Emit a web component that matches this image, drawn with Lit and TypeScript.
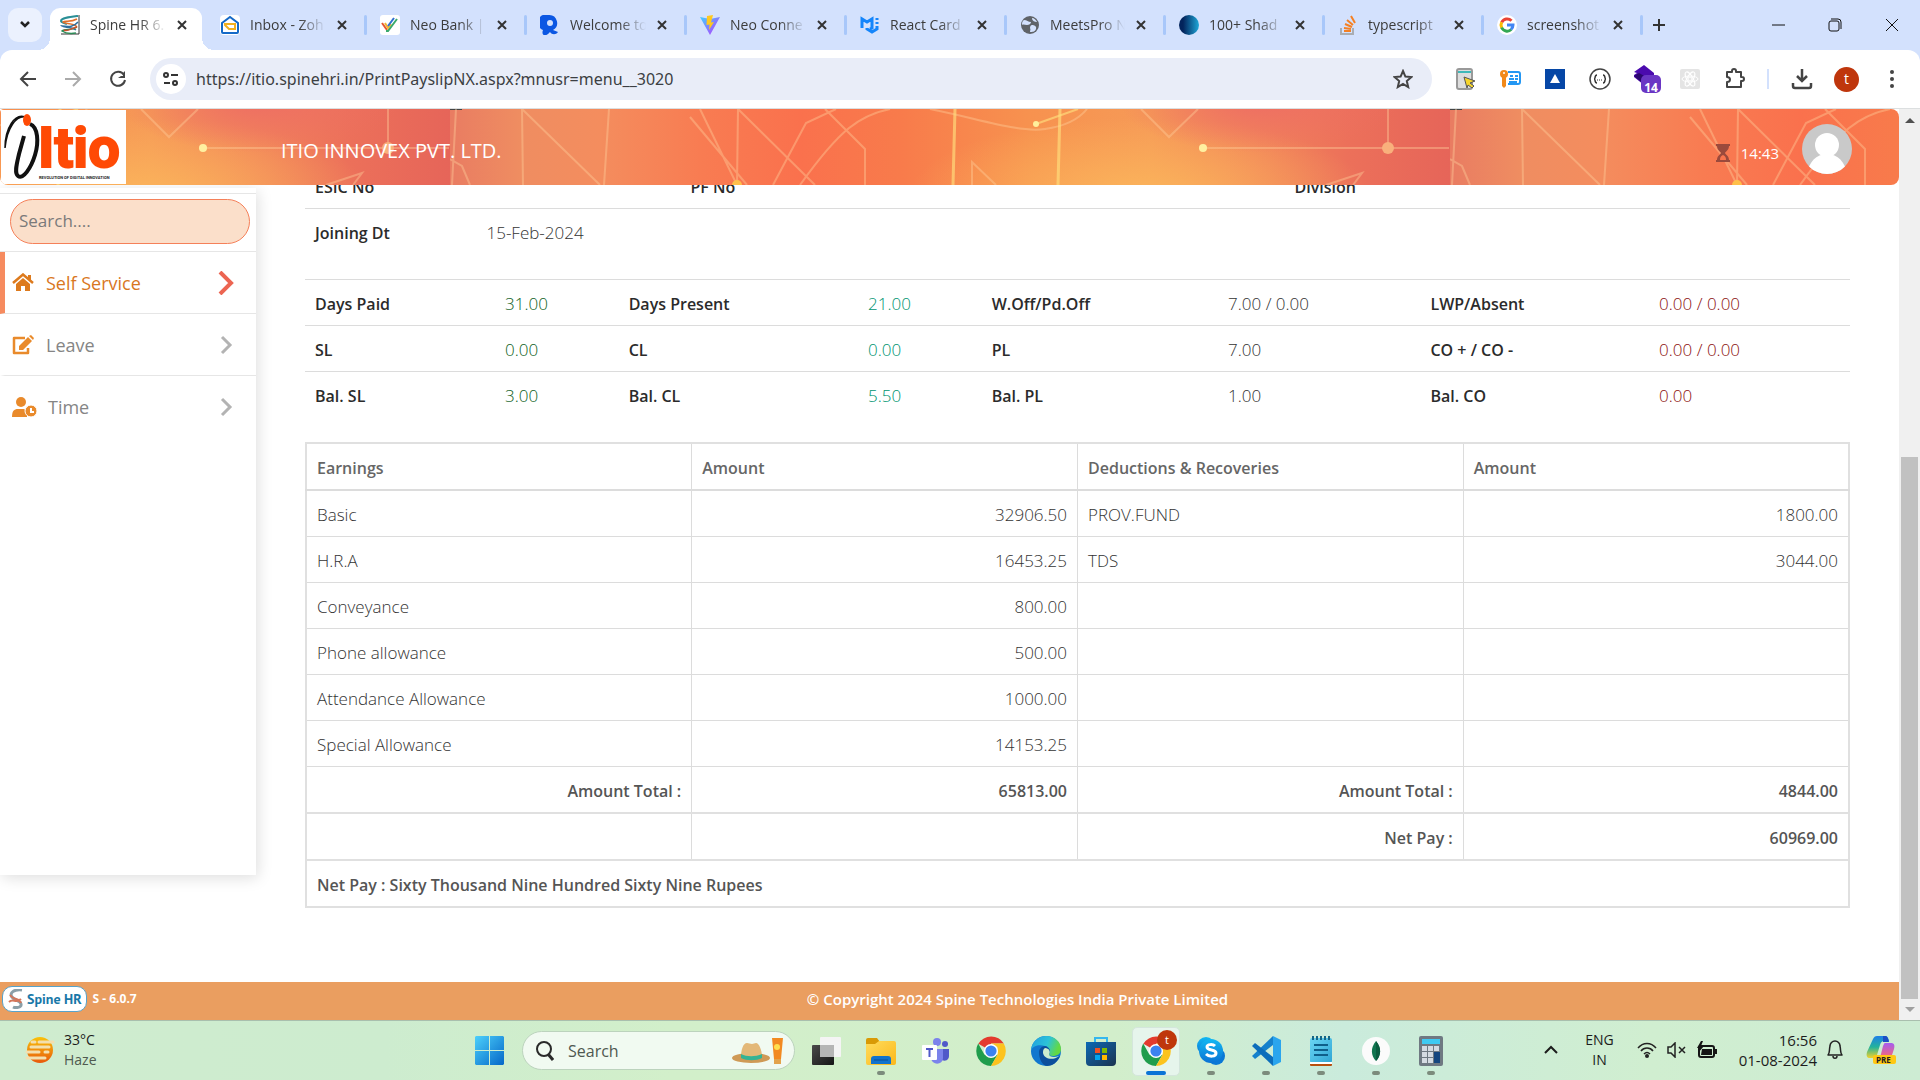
import { LitElement, html, svg, css, nothing, TemplateResult } from "lit";
import { customElement } from "lit/decorators.js";

const icon = (w: number, h: number, body: unknown) =>
  html`<svg width=${w} height=${h} viewBox="0 0 ${w} ${h}" fill="none" aria-hidden="true">${body}</svg>`;

const chromeMark = svg`
  <path d="M15 15 2.4 7.8A15 15 0 0 1 27.9 7.5H15Z" fill="#e33b2e"/>
  <path d="M2.2 7.6A15 15 0 0 0 15 30l6.5-11.3L15 15 8.5 18.7Z" fill="#1f9d4c"/>
  <path d="M27.8 7.5A15 15 0 0 1 15 30l6.5-11.2L21.4 11 15 7.5Z" fill="#fcc31e"/>
  <circle cx="15" cy="15" r="7" fill="#fff"/><circle cx="15" cy="15" r="5.6" fill="#3b82f0"/>`;

const favicons: Record<string, TemplateResult> = {
  spine: icon(20, 20, svg`
    <path d="M19 0v19H1" stroke="#333" stroke-width="1"/>
    <path d="M18 1C10 2 1 3 1 6c0 2 4 2 6 3" stroke="#2a8f96" stroke-width="2"/>
    <path d="M17 4C10 8 5 5 3 7c0 2 12 1 14 5" stroke="#e2702a" stroke-width="1.500"/>
    <path d="M18 7c-4 5-9 5-16 4 2 2 9 0 14 4" stroke="#2d6f9e" stroke-width="1.500"/>
    <path d="M17 12c-5 4-12 1-15 4 3 2 8 3 14 2" stroke="#2e8b57" stroke-width="1.500"/>
    <path d="M4 15c4 2 7-2 13-3" stroke="#c8502d" stroke-width="1.500"/>`),
  inbox: icon(20, 20, svg`
    <rect width="20" height="20" rx="4" fill="#fff"/>
    <path d="M2 8 10 2l8 6v9a1 1 0 0 1-1 1H3a1 1 0 0 1-1-1Z" stroke="#1469c7" stroke-width="2"/>
    <path d="M5 9h10v5H9l-4-4Z" fill="#fff" stroke="#f2b01e" stroke-width="2"/>`),
  neobank: icon(20, 20, svg`
    <rect width="20" height="20" rx="3" fill="#fff"/>
    <path d="m2 8 5 7" stroke="#e4572e" stroke-width="2"/>
    <path d="m5 8 3 5 3-4" stroke="#f2b632" stroke-width="2"/>
    <path d="m6 16 2 0 9-12" stroke="#39a96b" stroke-width="2"/>
    <path d="m8 11 6-8" stroke="#2f6fd0" stroke-width="2"/>`),
  welcome: icon(20, 20, svg`
    <path d="M9 0a8 8 0 0 1 4 15l5 2c-2 3-6 3-8 0-5 6-9 3-7-2A8 8 0 0 1 9 0Z" fill="#0b57e3"/>
    <circle cx="10" cy="8" r="3" fill="#d3e1fd"/>`),
  vite: icon(20, 20, svg`
    <defs><linearGradient id="vg" x1="0" y1="0" x2="1" y2="1"><stop stop-color="#41d1ff"/><stop offset="1" stop-color="#bd34fe"/></linearGradient></defs>
    <path d="m0 2 10 18L20 2l-10 2Z" fill="url(#vg)"/>
    <path d="m13 0-6 1-.5 9 3-.6L9 15l5-8-3 .5Z" fill="#ffc820"/>`),
  mui: icon(20, 20, svg`
    <path d="M2 13V4l5 3 5-3v4M7 13v1l5 3 5-3v-3M12 8v5l-2 1M17 9V7M17 5V3" stroke="#1485fb" stroke-width="3"/>`),
  meets: icon(20, 20, svg`
    <circle cx="10" cy="10" r="9" fill="#5f6368"/>
    <path d="M4 5c3 0 4 2 7 2 0 2-2 3-4 3s-4-1-5 0c0-2 0-4 2-5ZM12 10c2 0 5 1 4 4s-4 3-6 3c0-2 1-2 0-4 0-2 1-3 2-3ZM12 3c2 0 4 2 5 4-2 0-5-1-5-4Z" fill="#d3e1fd"/>`),
  shades: icon(20, 20, svg`
    <defs><linearGradient id="sg"><stop offset=".2" stop-color="#03245c"/><stop offset="1" stop-color="#1fa7d8"/></linearGradient></defs>
    <circle cx="10" cy="10" r="10" fill="url(#sg)"/>`),
  stack: icon(20, 20, svg`
    <path d="M3 13v6h12v-6" stroke="#a9adb3" stroke-width="2"/>
    <path d="M6 16h7M6 13l7 1M7 9l7 3M9 5l6 5M13 1l4 7" stroke="#f48024" stroke-width="2"/>`),
  google: icon(20, 20, svg`
    <circle cx="10" cy="10" r="10" fill="#fff"/>
    <path d="M14.5 5.8A6 6 0 0 0 4.700 7.400" stroke="#ea4335" stroke-width="3"/>
    <path d="M4.700 7.200a6 6 0 0 0 0 5.600" stroke="#fbbc05" stroke-width="3"/>
    <path d="M4.600 12.500a6 6 0 0 0 9.600 2" stroke="#34a853" stroke-width="3"/>
    <path d="M10 10h6a6 6 0 0 1-2 4.500" stroke="#4285f4" stroke-width="3"/>`),
};

const TABS = [
  ["spine", "Spine HR 6."],
  ["inbox", "Inbox - Zoh"],
  ["neobank", "Neo Bank |"],
  ["welcome", "Welcome to"],
  ["vite", "Neo Conne"],
  ["mui", "React Card"],
  ["meets", "MeetsPro N"],
  ["shades", "100+ Shad"],
  ["stack", "typescript"],
  ["google", "screenshot"],
];

const closeX = icon(12, 12, svg`<path d="m2 2 8 8M10 2 2 10" stroke="#333" stroke-width="2"/>`);

const tool = {
  back: icon(18, 18, svg`<path d="M17 9H3M9 2 2 9l7 7" stroke="#444" stroke-width="2"/>`),
  forward: icon(18, 18, svg`<path d="M1 9h14M9 2l7 7-7 7" stroke="#aaa" stroke-width="2"/>`),
  reload: icon(18, 18, svg`<path d="M15 5a7 7 0 1 0 1 5" stroke="#444" stroke-width="2"/><path d="M16 1v7H9l3-2h2V3Z" fill="#444"/>`),
  site: icon(18, 16, svg`<circle cx="4" cy="4" r="2" stroke="#333" stroke-width="2"/><path d="M9 4h7M2 12h6" stroke="#333" stroke-width="2"/><circle cx="13" cy="12" r="2" stroke="#333" stroke-width="2"/>`),
  star: icon(20, 20, svg`<path d="m10 2 2.400 5.600 6 .5-4.600 4 1.400 6L10 15l-5.200 3.100 1.400-6-4.600-4 6-.5Z" stroke="#444" stroke-width="2"/>`),
};

const extensions = [
  ["Page picker", icon(22, 22, svg`<rect x="3" y="1" width="15" height="20" rx="2" fill="#ddd" stroke="#999" stroke-width="2"/><path d="M4 4h13" stroke="#3fb8b8" stroke-width="2"/><path d="m10 9 11 4-5 2 4 3-2 2-4-3-1 3Z" fill="#f7d52a" stroke="#555" stroke-width="1"/>`)],
  ["Password manager", icon(22, 22, svg`<circle cx="5" cy="6" r="4" fill="#f28a1a"/><path d="M3 8h4v10l-2 2-2-2Z" fill="#f28a1a"/><circle cx="5" cy="5" r="1" fill="#fff"/><path d="M9 4h10a2 2 0 0 1 2 2v8a2 2 0 0 1-2 2H9" stroke="#2497f3" stroke-width="2"/><path d="M11 8h3m2 0h3M10 11h5m1 0h3M10 14h8" stroke="#2497f3" stroke-width="2"/>`)],
  ["Triangle", icon(20, 20, svg`<rect width="20" height="20" fill="#0647a6"/><path d="m10 5 5 9H5Z" fill="#fff"/>`)],
  ["JSON viewer", icon(22, 22, svg`<circle cx="11" cy="11" r="10" stroke="#444" stroke-width="1.500"/><path d="M8 7c-3 0-1 4-3 4 2 0 0 4 3 4M14 7c3 0 1 4 3 4-2 0 0 4-3 4" stroke="#333" stroke-width="1.500"/><path d="M8 12h1m1 0h1m1 0h1" stroke="#333"/>`)],
  ["Layers", icon(32, 32, svg`<path d="m15 2 10 8v4l-10 8-10-8v-2l3-2-3-1Z" fill="#4b0aae"/><path d="m5 13 5-3 7 4v9Z" fill="#2b066e"/><rect x="12" y="12" width="20" height="18" rx="5" fill="#6a36c4"/>`)],
  ["React tools", icon(20, 20, svg`<rect width="20" height="20" rx="2" fill="#e4e4e4"/><g stroke="#fff" stroke-width="1"><ellipse cx="10" cy="10" rx="8" ry="3"/><ellipse cx="10" cy="10" rx="8" ry="3" transform="rotate(60 10 10)"/><ellipse cx="10" cy="10" rx="8" ry="3" transform="rotate(120 10 10)"/><circle cx="10" cy="10" r="2"/></g>`)],
  ["Extensions", icon(22, 22, svg`<path d="M3 4h5V3a2 2 0 0 1 4 0v1h5v5h1a2 2 0 0 1 0 4h-1v6H3v-5c4 0 4-5 0-5Z" stroke="#444" stroke-width="2" stroke-linejoin="round"/>`)],
] as const;

const downloadIcon = icon(22, 22, svg`<path d="M11 1v11M6 8l5 5 5-5M2 15v3a2 2 0 0 0 2 2h14a2 2 0 0 0 2-2v-3" stroke="#444" stroke-width="2.500"/>`);
const dotsIcon = icon(4, 20, svg`<g fill="#444"><circle cx="2" cy="3" r="2"/><circle cx="2" cy="10" r="2"/><circle cx="2" cy="17" r="2"/></g>`);

const bannerArt = svg`
  <defs>
    <linearGradient id="base" gradientUnits="userSpaceOnUse" x1="0" y1="0" x2="1000" y2="0">
      <stop offset="0" stop-color="#e97c62"/><stop offset=".07" stop-color="#ef8d61"/>
      <stop offset=".15" stop-color="#f48d5e"/><stop offset=".25" stop-color="#f87c52"/>
      <stop offset=".35" stop-color="#fa714d"/><stop offset=".45" stop-color="#f87b4b"/>
      <stop offset=".58" stop-color="#f7924f"/><stop offset=".7" stop-color="#f69a57"/>
      <stop offset=".8" stop-color="#f2865a"/><stop offset=".9" stop-color="#ec705a"/>
      <stop offset="1" stop-color="#e66559"/>
    </linearGradient>
    <radialGradient id="warm" gradientUnits="userSpaceOnUse" cx="0" cy="0" r="1" gradientTransform="translate(690 86) scale(230 78)">
      <stop stop-color="#fbb45b"/><stop offset="1" stop-color="#fbb45b" stop-opacity="0"/>
    </radialGradient>
    <radialGradient id="rose" gradientUnits="userSpaceOnUse" cx="0" cy="0" r="1" gradientTransform="translate(810 -6) scale(140 50)">
      <stop stop-color="#ee6f63"/><stop offset="1" stop-color="#ee6f63" stop-opacity="0"/>
    </radialGradient>
    <pattern id="circuit" patternUnits="userSpaceOnUse" x="450" y="0" width="1000" height="76">
      <rect width="1000" height="76" fill="url(#base)"/>
      <rect width="1000" height="76" fill="url(#warm)"/>
      <rect width="1000" height="76" fill="url(#rose)"/>
      <rect x="0" width="12" height="1" fill="#444"/>
      <g fill="none" stroke="#ffd09a" stroke-opacity=".4" stroke-width="2">
        <path d="m6 0-4 76M0 50l12 7 8 19M72 0l1 76M72 0l78 76M159 0l-5 76M240 8l57 68M250 0l37 76M288 0l-1 76M288 0l77 76M323 76l33-62L386 0M375 0l40 40v36M350 76C390 20 410 6 440 0"/>
        <path d="M480 0c50 10 90 24 115 20 22-3 34-10 42-20M522 76V53l24 23M691 0l28 28L748 0M938 0v40M876 76l36-12-9 12"/>
        <path d="M753 39h246"/>
      </g>
      <g fill="none" stroke="#ffdf7c" stroke-opacity=".65" stroke-width="3">
        <path d="m505 0-2 76M610 0l-2 76"/><path d="m586 15 42-15" stroke-width="2"/>
      </g>
      <circle cx="586" cy="15" r="3" fill="#ffef9c"/>
      <circle cx="753" cy="39" r="4" fill="#fff0a0"/>
      <circle cx="938" cy="39" r="6" fill="#f9b07c"/>
      <circle cx="287" cy="76" r="5" fill="#ffc04a"/>
    </pattern>
  </defs>
  <rect width="100%" height="100%" fill="url(#circuit)"/>`;

const menuIcons = {
  home: icon(24, 20, svg`<path d="m1 10 10-8.500L21 10" stroke="#dd7a1d" stroke-width="2.500"/><path d="M16 2h3v5h-3Z" fill="#dd7a1d"/><path d="m4 11 7-6 7 6v7h-5v-5H9v5H4Z" fill="#dd7a1d"/>`),
  edit: icon(24, 20, svg`<path d="M13 3H2v15h14v-5" stroke="#e98a2b" stroke-width="2.500" stroke-linejoin="round"/><path d="m7 11 9-9 4 4-9 9H7ZM17 1l2-1 3 3-1 2Z" fill="#e98a2b"/>`),
  user: icon(26, 20, svg`<circle cx="9" cy="5" r="5" fill="#e98a2b"/><path d="M0 20c0-6 2-8 6-8h6l3 2v6Z" fill="#e98a2b"/><circle cx="19" cy="14" r="6" fill="#e98a2b" stroke="#fff" stroke-width="1"/><path d="M19 11v4h3" stroke="#fff" stroke-width="2"/>`),
};

const MENU = [
  { label: "Self Service", icon: menuIcons.home, active: true },
  { label: "Leave", icon: menuIcons.edit, active: false },
  { label: "Time", icon: menuIcons.user, active: false },
];

const LEAVES = [
  ["Days Paid", "31.00", "Days Present", "21.00", "W.Off/Pd.Off", "7.00 / 0.00", "LWP/Absent", "0.00 / 0.00"],
  ["SL", "0.00", "CL", "0.00", "PL", "7.00", "CO + / CO -", "0.00 / 0.00"],
  ["Bal. SL", "3.00", "Bal. CL", "5.50", "Bal. PL", "1.00", "Bal. CO", "0.00"],
];
const TONES = ["green", "teal", "grey", "red"];

const PAY = [
  ["Basic", "32906.50", "PROV.FUND", "1800.00"],
  ["H.R.A", "16453.25", "TDS", "3044.00"],
  ["Conveyance", "800.00", "", ""],
  ["Phone allowance", "500.00", "", ""],
  ["Attendance Allowance", "1000.00", "", ""],
  ["Special Allowance", "14153.25", "", ""],
];

const APPS: { name: string; art: TemplateResult; state?: string }[] = [
  { name: "Task view", art: icon(30, 30, svg`<defs><linearGradient id="tv" x1="0" y1="0" x2="1" y2="1"><stop stop-color="#4a4a4a"/><stop offset="1" stop-color="#151515"/></linearGradient></defs><rect x="1" y="9" width="22" height="20" rx="1" fill="url(#tv)"/><rect x="9" y="1" width="21" height="20" rx="1" fill="#f4f4f4"/><path d="M9 9h14v12H9Z" fill="#b5b5b5"/>`) },
  { name: "File Explorer", state: "open", art: icon(30, 30, svg`<defs><linearGradient id="fe" x1="0" y1="0" x2="1" y2="1"><stop stop-color="#ffdc5c"/><stop offset="1" stop-color="#fbb81c"/></linearGradient></defs><path d="M0 4a2 2 0 0 1 2-2h9l3 4-4 3H0Z" fill="#d99a06"/><path d="M0 8h9l4-3h15a2 2 0 0 1 2 2v20a2 2 0 0 1-2 2H2a2 2 0 0 1-2-2Z" fill="url(#fe)"/><path d="M5 28v-5a3 3 0 0 1 3-3h14a3 3 0 0 1 3 3v5Z" fill="#1273cc"/><path d="M8 24h14" stroke="#0b4f96" stroke-width="1"/>`) },
  { name: "Teams", art: icon(28, 26, svg`<circle cx="15" cy="4" r="4" fill="#7b83eb"/><circle cx="23" cy="6" r="3" fill="#5059c9"/><path d="M17 11h10v7c0 5-6 6-8 3Z" fill="#5059c9"/><path d="M9 11h12v9c0 7-11 8-12 0Z" fill="#7b83eb"/><rect x="0" y="7" width="15" height="15" rx="1" fill="#fff"/><path d="M4 11h7M7.500 11v8" stroke="#5059c9" stroke-width="2"/>`) },
  { name: "Chrome", art: icon(30, 30, chromeMark) },
  { name: "Edge", art: icon(30, 30, svg`<defs><linearGradient id="eg" x1="0" y1="0" x2="1" y2=".3"><stop stop-color="#1f9de0"/><stop offset=".6" stop-color="#2cc3d8"/><stop offset="1" stop-color="#63d944"/></linearGradient></defs><circle cx="15" cy="15" r="15" fill="#1177cf"/><path d="M0 14C1 5 8 0 15 0c9 0 15 6 15 13 0 5-4 7-8 7-3 0-4-1-4-2 2-2 1-7-4-8C8 8 2 10 0 14Z" fill="url(#eg)"/><path d="M8 16c0-3 3-6 6-6 5 1 6 6 4 8 0 4 7 5 11 2-3 7-8 10-13 10-5-1-8-7-8-14Z" fill="#0c4f9c"/><path d="M14 12c4 0 6 4 4 6 0 3 5 4 10 2-6 5-15 3-16-3 0-2 0-4 2-5Z" fill="#cdeccf"/>`) },
  { name: "Store", art: icon(30, 30, svg`<defs><linearGradient id="st" x1="0" y1="0" x2="1" y2="1"><stop stop-color="#0d69b4"/><stop offset="1" stop-color="#1b3350"/></linearGradient></defs><path d="M9 7V2h12v5" stroke="#34b7ee" stroke-width="2"/><path d="M0 6h30v20a4 4 0 0 1-4 4H4a4 4 0 0 1-4-4Z" fill="url(#st)"/><path d="M9 12h5v5H9Z" fill="#f25022"/><path d="M16 12h5v5h-5Z" fill="#7fba00"/><path d="M9 19h5v5H9Z" fill="#00a4ef"/><path d="M16 19h5v5h-5Z" fill="#ffb900"/>`) },
  { name: "Chrome, profile t", state: "active", art: icon(30, 30, chromeMark) },
  { name: "Skype", state: "open", art: icon(28, 28, svg`<defs><linearGradient id="sk" x1="0" y1="0" x2="0" y2="1"><stop stop-color="#12b8f2"/><stop offset="1" stop-color="#0a72d4"/></linearGradient></defs><circle cx="9" cy="9" r="9" fill="url(#sk)"/><circle cx="19" cy="19" r="9" fill="#0a78d6"/><circle cx="14" cy="14" r="12" fill="url(#sk)"/><path d="M18 9c-2-2-8-2-8 1 0 4 9 2 9 6 0 4-7 4-10 1" stroke="#fff" stroke-width="3"/>`) },
  { name: "VS Code", state: "open", art: icon(30, 30, svg`<path d="m22 0 8 4v22l-8 4Z" fill="#2aa5ee"/><path d="M22 0v9L4 23l-3-3Z" fill="#1581cc"/><path d="M22 30v-9L4 7l-3 3Z" fill="#0c6dbb"/>`) },
  { name: "Notepad", state: "open", art: icon(24, 30, svg`<defs><linearGradient id="np" x1="0" y1="0" x2="1" y2="1"><stop stop-color="#6bd6f4"/><stop offset="1" stop-color="#2fa5d4"/></linearGradient></defs><rect x="1" y="2" width="22" height="25" rx="2" fill="url(#np)"/><path d="M1 26h22v2a1 1 0 0 1-1 1H2a1 1 0 0 1-1-1Z" fill="#fff"/><path d="M1 28h22v1a1 1 0 0 1-1 1H2a1 1 0 0 1-1-1Z" fill="#b8500f"/><path d="M4 0v4M8 0v4M12 0v4M16 0v4M20 0v4" stroke="#146687" stroke-width="2"/><path d="M5 9h14M5 14h14M5 19h14" stroke="#0f5f8a" stroke-width="2"/>`) },
  { name: "MongoDB Compass", state: "open", art: icon(28, 28, svg`<circle cx="14" cy="14" r="14" fill="#fbfbfb"/><path d="M14 4c6 7 5 15 0 20-5-5-6-13 0-20Z" fill="#10754f"/><path d="M14 4c6 7 5 15 0 20Z" fill="#0a5c3f"/>`) },
  { name: "Calculator", state: "open", art: icon(24, 30, svg`<rect width="24" height="30" rx="2" fill="#6f7982"/><rect x="3" y="3" width="18" height="5" fill="#3fcaf2"/><g fill="#d5dbe2"><path d="M3 10h5v5H3ZM9 10h5v5H9ZM15 10h5v5h-5ZM3 16h5v5H3ZM9 16h5v5H9ZM3 22h5v5H3ZM9 22h5v5H9Z"/></g><rect x="15" y="16" width="6" height="11" fill="#15467f"/>`) },
];

@customElement("browser-chrome")
class BrowserChrome extends LitElement {
  static styles = css`
    :host { display: block; background: #d3e1fd; font: 14px/20px "Open Sans", "Noto Sans", sans-serif; color: #3c3c3c; }
    button { border: 0; padding: 0; background: none; font: inherit; color: inherit; display: flex; align-items: center; justify-content: center; }
    svg { display: block; flex: none; }
    .strip { display: flex; height: 50px; padding-left: 8px; }
    .search { width: 34px; height: 34px; margin: 8px 8px 0 0; border-radius: 10px; background: #ebf1fe; }
    .tab { display: flex; align-items: center; gap: 10px; width: 160px; box-sizing: border-box; padding: 0 18px 0 14px; position: relative; }
    .tab:nth-of-type(n + 7) { width: 159px; }
    .tab + .tab::after { content: ""; position: absolute; right: -1px; top: 15px; width: 3px; height: 20px; background: #a8c7fa; border-radius: 2px; }
    .active { width: 152px; margin: 8px 4px 0 0; padding: 0 14px 8px 10px; background: #fff; border-radius: 10px 10px 0 0; }
    .active::before, .active::after { content: ""; position: absolute; bottom: 0; width: 12px; height: 12px; }
    .active::before { left: -12px; background: radial-gradient(circle at 0 0, transparent 12px, #fff 12px); }
    .active::after { right: -12px; background: radial-gradient(circle at 100% 0, transparent 12px, #fff 12px); }
    .title { flex: 1; min-width: 0; overflow: hidden; white-space: nowrap; mask-image: linear-gradient(90deg, #000 65%, transparent); }
    .close { width: 12px; height: 20px; }
    .plus { width: 34px; height: 50px; }
    .windows { display: flex; margin-left: auto; }
    .windows button { width: 57px; height: 50px; }
    .toolbar { display: flex; align-items: center; height: 58px; padding: 0 6px 0 5px; background: #fff; border-bottom: 1px solid #dcdfe0; border-radius: 12px 12px 0 0; }
    .toolbar button { width: 45px; height: 42px; position: relative; }
    .omnibox { flex: 1; display: flex; align-items: center; height: 42px; margin: 0 10px; border-radius: 21px; background: #e9edf8; }
    .omnibox .site { width: 30px; height: 30px; margin: 0 10px 0 6px; border-radius: 50%; background: #fff; }
    .omnibox input { flex: 1; border: 0; padding: 0; outline: 0; background: none; color: #3c3f43; font: 16px/24px "Noto Sans", "Open Sans", sans-serif; }
    .omnibox .star { width: 58px; }
    .badge { position: absolute; left: 19px; top: 22px; width: 20px; color: #fff; font: 700 12px/16px "Open Sans", sans-serif; text-align: center; }
    .divider { width: 2px; height: 20px; margin: 0 10px; background: #d3e1fd; }
    .profile { width: 25px; height: 25px; border-radius: 50%; background: #bf360c; color: #fff; font-size: 14px; line-height: 24px; }
  `;
  render() {
    return html`
      <div class="strip">
        <button class="search" aria-label="Search tabs">${icon(14, 14, svg`<path d="m3 4 4 4 4-4" stroke="#222" stroke-width="2.500"/>`)}</button>
        ${TABS.map(([key, title], i) => html`
          <div class="tab ${i === 0 ? "active" : ""}">
            ${favicons[key]}<span class="title">${title}</span>
            <button class="close" aria-label="Close tab">${closeX}</button>
          </div>`)}
        <button class="plus" aria-label="New tab">${icon(14, 14, svg`<path d="M7 1v12M1 7h12" stroke="#333" stroke-width="2"/>`)}</button>
        <div class="windows">
          <button aria-label="Minimize">${icon(14, 14, svg`<path d="M1 7h13" stroke="#111"/>`)}</button>
          <button aria-label="Restore">${icon(14, 14, svg`<rect x="1" y="3" width="10" height="10" rx="2" stroke="#111"/><path d="M3 1h7a3 3 0 0 1 3 3v7" stroke="#111"/>`)}</button>
          <button aria-label="Close">${icon(14, 14, svg`<path d="m1 1 12 12M13 1 1 13" stroke="#111"/>`)}</button>
        </div>
      </div>
      <div class="toolbar">
        <button aria-label="Back">${tool.back}</button>
        <button aria-label="Forward">${tool.forward}</button>
        <button aria-label="Reload">${tool.reload}</button>
        <div class="omnibox">
          <button class="site" aria-label="Site information">${tool.site}</button>
          <input aria-label="Address" .value=${"https://itio.spinehri.in/PrintPayslipNX.aspx?mnusr=menu__3020"} />
          <button class="star" aria-label="Bookmark">${tool.star}</button>
        </div>
        ${extensions.map(([name, art]) => html`<button aria-label=${name}>${art}${name === "Layers" ? html`<span class="badge">14</span>` : nothing}</button>`)}
        <span class="divider"></span>
        <button aria-label="Downloads">${downloadIcon}</button>
        <button aria-label="Profile"><span class="profile">t</span></button>
        <button aria-label="Menu">${dotsIcon}</button>
      </div>`;
  }
}

@customElement("payslip-page")
class PayslipPage extends LitElement {
  static styles = css`
    :host { display: flex; flex: 1; min-height: 0; background: #fff; font: 16px/24px "Open Sans", "Noto Sans", sans-serif; color: #555; }
    button { border: 0; padding: 0; background: none; }
    svg { display: block; flex: none; }
    .app { flex: 1; display: flex; flex-direction: column; min-width: 0; }
    .banner { position: relative; z-index: 1; display: flex; align-items: center; height: 76px; border-radius: 4px 8px 8px 8px; overflow: hidden; color: #fff; }
    .art { position: absolute; inset: 0; width: 100%; height: 100%; }
    .banner > :not(.art) { position: relative; }
    .brand { margin: 0 155px 0 1px; background: #fff; }
    .company { margin: 8px auto 0 0; font-size: 20px; line-height: 28px; font-weight: 500; }
    .timer { display: flex; align-items: center; gap: 11px; margin: 11px 23px 0 0; font-size: 15px; line-height: 20px; font-weight: 500; }
    .avatar { margin: 4px 47px 0 0; }
    .body { flex: 1; display: flex; min-height: 0; overflow: hidden; }
    .side { width: 256px; margin: 3px 0 107px; box-sizing: border-box; box-shadow: 2px 3px 14px rgba(0, 0, 0, .13); background: #fff; }
    .find { padding: 5px 6px 7px 10px; margin-top: 5px; border-top: 1px solid #e6e6e6; border-bottom: 1px solid #e6e6e6; }
    .find input { width: 100%; height: 45px; box-sizing: border-box; border: 1px solid #f58059; border-radius: 23px; background: #fbdfca; padding: 0 8px 2px; font: 17px/24px "Open Sans", sans-serif; color: #666; outline: 0; }
    .find input::placeholder { color: #7a7a7a; opacity: 1; }
    .item { display: flex; align-items: center; gap: 10px; height: 61px; padding: 0 22px 0 7px; border-left: 5px solid transparent; border-bottom: 1px solid #e6e6e6; color: #858585; text-decoration: none; font-size: 18px; }
    .item:last-child { border-bottom: 0; }
    .item span { flex: 1; }
    .item.on { border-left-color: #f68b5f; color: #d9771e; }
    .content { flex: 1; min-width: 0; padding: 0 49px; }
    table { width: 100%; border-collapse: collapse; table-layout: fixed; }
    th { text-align: left; font-weight: 600; color: #2b2b2b; white-space: nowrap; }
    td { font-size: 17px; font-weight: 300; color: #333; white-space: nowrap; }
    th, td { padding: 12px 10px 9px; height: 24px; }
    .plain th, .plain td { border-top: 1px solid #dcdcdc; }
    .staff { margin: -23px 0 25px; }
    .leave { margin-bottom: 25px; }
    .a { width: 11.1%; } .b { width: 13.2%; } .c { width: 13%; } .d { width: 26.1%; }
    .l1 { width: 12.3%; } .l2 { width: 8%; } .l3 { width: 15.5%; } .l4 { width: 8%; } .l5 { width: 15.3%; } .l6 { width: 13.1%; } .l7 { width: 14.8%; }
    .plain .green { color: #0f5f24; } .plain .teal { color: #009470; } .plain .grey { color: #333; } .plain .red { color: #8c1010; }
    .pay { border: 2px solid #e0e0e0; }
    .pay th, .pay td { border: 1px solid #dcdcdc; }
    .pay th { color: #555; }
    .pay thead th { border-bottom: 2px solid #dcdcdc; color: #666; }
    .pay .num { text-align: right; }
    .pay tfoot tr { border-bottom: 2px solid #e0e0e0; }
    .foot { display: grid; grid-template-columns: 1fr auto 1fr; align-items: center; height: 38px; box-sizing: border-box; padding-bottom: 4px; background: #ea9e60; color: #fff; font-size: 15px; font-weight: 600; }
    .maker { display: flex; align-items: center; gap: 6px; padding-left: 2px; font-size: 12px; font-weight: 700; }
    .pill { display: flex; align-items: center; gap: 2px; height: 24px; padding: 0 4px; border: 1px solid #58a3ca; border-radius: 10px; background: #fff; color: #1878a8; font: 700 14px/20px "PT Sans", Lato, sans-serif; }
    .copy { padding-left: 136px; }
    .scroll { display: flex; flex-direction: column; align-items: center; width: 21px; background: #f0f0f0; }
    .scroll button { height: 21px; width: 21px; display: flex; align-items: center; justify-content: center; }
    .track { flex: 1; display: flex; align-items: flex-end; }
    .thumb { width: 17px; height: 62.4%; background: #c1c1c1; }
  `;
  render() {
    return html`
      <div class="app">
        <header class="banner">
          <svg class="art" aria-hidden="true">${bannerArt}</svg>
          <svg class="brand" width="125" height="74" viewBox="0 0 125 74" role="img" aria-label="iItio">
            <path d="M4 38C4 18 14 3 24 7M4 38C6 18 15 5 25 7" fill="none" stroke="#111" stroke-width="1.500"/>
            <path d="M29 14c8 3 9 18 5 31S22 70 17 66c-4-3-1-13 1-22l5-18" fill="none" stroke="#111" stroke-width="4"/>
            <ellipse cx="26" cy="10" rx="4" ry="6" fill="#ff4a05"/>
            <text x="37" y="57" font-family="Roboto" font-weight="700" font-size="56" fill="#ff4a05" stroke="#ff4a05" stroke-width="2">Itio</text>
            <text x="38" y="69" font-family="Roboto" font-weight="700" font-size="4" fill="#222">REVOLUTION OF DIGITAL INNOVATION</text>
          </svg>
          <h1 class="company">ITIO INNOVEX PVT. LTD.</h1>
          <div class="timer">${icon(14, 18, svg`<path d="M0 0h14v2h-1c0 4-3 5-4 7 1 2 4 3 4 7h1v2H0v-2h1c0-4 3-5 4-7-1-2-4-3-4-7H0Z" fill="#9b4a3c"/><path d="M4 16c0-3 1-4 3-5 2 1 3 2 3 5Z" fill="#f9754e"/>`)}<span>14:43</span></div>
          <svg class="avatar" width="50" height="50" viewBox="0 0 50 50" role="img" aria-label="User">
            <defs><clipPath id="av"><circle cx="25" cy="25" r="25"/></clipPath></defs>
            <g clip-path="url(#av)"><rect width="50" height="50" fill="#c9c9c9"/><circle cx="25" cy="21" r="12" fill="#fff"/><path d="M5 50c2-12 9-20 20-20s18 8 20 20Z" fill="#fff"/></g>
          </svg>
        </header>
        <div class="body">
          <nav class="side">
            <div class="find"><input type="text" aria-label="Search menu" placeholder="Search...." /></div>
            ${MENU.map((m) => html`
              <a class="item ${m.active ? "on" : ""}" href="#">${m.icon}<span>${m.label}</span>
                ${m.active
                  ? icon(16, 24, svg`<path d="m2 1 11 11L2 23" stroke="#ec6552" stroke-width="4"/>`)
                  : icon(14, 20, svg`<path d="m2 2 8 8-8 8" stroke="#b3b3b3" stroke-width="3"/>`)}
              </a>`)}
          </nav>
          <main class="content">
            <table class="plain staff">
              <colgroup><col class="a" /><col class="b" /><col class="c" /><col class="d" /><col class="c" /><col /></colgroup>
              <tbody>
                <tr><th>ESIC No</th><td></td><th>PF No</th><td></td><th>Division</th><td></td></tr>
                <tr><th>Joining Dt</th><td>15-Feb-2024</td><td></td><td></td><td></td><td></td></tr>
              </tbody>
            </table>
            <table class="plain leave">
              <colgroup>${[1, 2, 3, 4, 5, 6, 7].map((n) => html`<col class="l${n}" />`)}<col /></colgroup>
              <tbody>${LEAVES.map((row) => html`<tr>${row.map((c, i) => (i % 2 ? html`<td class=${TONES[(i - 1) / 2]}>${c}</td>` : html`<th>${c}</th>`))}</tr>`)}</tbody>
            </table>
            <table class="pay">
              <thead><tr><th>Earnings</th><th>Amount</th><th>Deductions &amp; Recoveries</th><th>Amount</th></tr></thead>
              <tbody>${PAY.map((row) => html`<tr>${row.map((c, i) => html`<td class=${i % 2 ? "num" : ""}>${c}</td>`)}</tr>`)}</tbody>
              <tfoot>
                <tr><th class="num">Amount Total :</th><th class="num">65813.00</th><th class="num">Amount Total :</th><th class="num">4844.00</th></tr>
                <tr><th></th><th></th><th class="num">Net Pay :</th><th class="num">60969.00</th></tr>
                <tr><th colspan="4">Net Pay : Sixty Thousand Nine Hundred Sixty Nine Rupees</th></tr>
              </tfoot>
            </table>
          </main>
        </div>
        <footer class="foot">
          <div class="maker">
            <span class="pill">${icon(18, 20, svg`<path d="M15 1C7 0 2 4 5 8s8 3 9 7-6 4-8 3" stroke="#8a9fa8" stroke-width="3"/><path d="M3 6c4 6 9 2 11 8M2 13c4-4 7 2 12-3" stroke="#d4765a" stroke-width="2"/>`)}Spine HR</span>
            <span>S - 6.0.7</span>
          </div>
          <span class="copy">© Copyright 2024 Spine Technologies India Private Limited</span>
        </footer>
      </div>
      <div class="scroll">
        <button aria-label="Scroll up">${icon(10, 6, svg`<path d="m0 6 5-5 5 5Z" fill="#505050"/>`)}</button>
        <div class="track"><div class="thumb"></div></div>
        <button aria-label="Scroll down">${icon(10, 6, svg`<path d="m0 0 5 5 5-5Z" fill="#a0a0a0"/>`)}</button>
      </div>`;
  }
}

@customElement("task-bar")
class TaskBar extends LitElement {
  static styles = css`
    :host { display: grid; grid-template-columns: 1fr auto 1fr; align-items: center; height: 59px; border-top: 1px solid #a9bfae; background: linear-gradient(90deg, #cfeccf, #cdeccf 20%, #d2efca 35%, #d2eecb 58%, #caebdc 70%, #d0eed0 86%, #cdecd3); font: 14px/24px "Open Sans", "Noto Sans", sans-serif; color: #1c1c1c; }
    button { border: 0; padding: 0; background: none; font: inherit; color: inherit; }
    svg { display: block; flex: none; }
    .weather { display: flex; align-items: center; gap: 9px; padding: 0 0 2px 25px; text-align: left; }
    .muted { color: #4f5a50; }
    .weather span, .two span { display: block; line-height: 20px; }
    .apps { display: flex; align-items: center; }
    .app { position: relative; display: flex; align-items: center; justify-content: center; width: 55px; height: 58px; }
    .app.open::after, .app.active::after { content: ""; position: absolute; left: 24px; bottom: 5px; width: 8px; height: 4px; border-radius: 2px; background: #7c8b7c; }
    .app.active::after { left: 18px; width: 20px; background: #0a74d6; }
    .app.active::before { content: ""; position: absolute; inset: 5px 3px 4px 4px; border: 1px solid #d4e6dc; border-radius: 5px; background: #e6f5ec; box-sizing: border-box; }
    .app svg { position: relative; }
    .chip { position: absolute; left: 29px; top: 8px; width: 20px; height: 20px; border-radius: 50%; background: #bf360c; color: #fff; font-size: 11px; line-height: 19px; }
    .search { display: flex; align-items: center; gap: 14px; width: 273px; height: 39px; box-sizing: border-box; margin: 0 3px 0 5px; padding: 0 10px 0 13px; border: 1px solid #bcd3bd; border-radius: 20px; background: #f1faf1; }
    .search input { flex: 1; min-width: 0; border: 0; padding: 0; outline: 0; background: none; font: 16px/24px "Open Sans", sans-serif; }
    .search input::placeholder { color: #4f5850; opacity: 1; }
    .tray { display: flex; align-items: center; justify-content: flex-end; padding: 0 24px 2px 0; }
    .two { text-align: center; margin: 0 23px 0 27px; }
    .net { display: flex; align-items: center; gap: 10px; margin-right: 22px; }
    .two.clock { margin: 0 9px 0 0; text-align: right; font-size: 15px; }
    .bell { margin-right: 22px; }
  `;
  render() {
    return html`
      <button class="weather">
        ${icon(30, 28, svg`<defs><linearGradient id="sun" x1="0" y1="0" x2="0" y2="1"><stop stop-color="#f9c20a"/><stop offset="1" stop-color="#e8590c"/></linearGradient></defs><circle cx="15" cy="14" r="13" fill="url(#sun)"/><path d="M7 6h3M14 6h14M6 11h18M2 16h12M20 16h3M2 22h18" stroke="#f3dfae" stroke-width="3" stroke-linecap="round"/>`)}
        <div><span>33°C</span><span class="muted">Haze</span></div>
      </button>
      <div class="apps">
        <button class="app" aria-label="Start">${icon(29, 29, svg`<defs><linearGradient id="win" gradientUnits="userSpaceOnUse" x1="0" y1="0" x2="29" y2="29"><stop stop-color="#4cd0fb"/><stop offset="1" stop-color="#0567c8"/></linearGradient></defs><path d="M1 0h13v14H0V1ZM15 0h13l1 1v13H15ZM0 15h14v14H1l-1-1ZM15 15h14v13l-1 1H15Z" fill="url(#win)"/>`)}</button>
        <div class="search">
          ${icon(18, 20, svg`<circle cx="8" cy="8" r="7" stroke="#2a2a2a" stroke-width="2"/><path d="m12 13 5 6" stroke="#2a2a2a" stroke-width="3"/>`)}
          <input type="text" aria-label="Search" placeholder="Search" />
          ${icon(52, 28, svg`<ellipse cx="19" cy="21" rx="19" ry="5" fill="#cf9a56"/><path d="M9 20c0-7 2-14 6-14l5 1 4-1c3 0 6 7 6 14Z" fill="#e3b878"/><path d="M9 17c6 3 14 3 21 0v4c-6 3-15 3-21 0Z" fill="#35b394"/><path d="M40 1h11l-2 21h-7Z" fill="#f28a22"/><path d="M42 22h7v5h-7Z" fill="#e3a34c"/><circle cx="45" cy="10" r="3" fill="#ffdf4d"/>`)}
        </div>
        ${APPS.map((a) => html`<button class="app ${a.state ?? ""}" aria-label=${a.name}>${a.art}${a.state === "active" ? html`<span class="chip">t</span>` : nothing}</button>`)}
      </div>
      <div class="tray">
        <button aria-label="Hidden icons">${icon(14, 10, svg`<path d="m1 8 6-6 6 6" stroke="#1c1c1c" stroke-width="2"/>`)}</button>
        <div class="two"><span>ENG</span><span>IN</span></div>
        <div class="net">
          ${icon(20, 18, svg`<g stroke="#222" stroke-width="1.500"><path d="M1 7c5-6 13-6 18 0M4 10c3-4 9-4 12 0M7 13c2-2 4-2 6 0"/></g><circle cx="10" cy="15" r="2" fill="#222"/>`)}
          ${icon(20, 16, svg`<path d="M1 5h3l4-4v14l-4-4H1Z" stroke="#222" stroke-width="1.500"/><path d="m12 5 6 6m0-6-6 6" stroke="#222" stroke-width="1.500"/>`)}
          ${icon(20, 18, svg`<rect x="2" y="5" width="15" height="11" rx="2" stroke="#151515" stroke-width="2"/><path d="M5 8h10v6H4ZM18 8h2v5h-2Z" fill="#151515"/><path d="M4 0 0 7h3L1 12l6-7H4l2-5Z" fill="#151515"/>`)}
        </div>
        <div class="two clock"><span>16:56</span><span>01-08-2024</span></div>
        <button class="bell" aria-label="Notifications">${icon(18, 20, svg`<path d="M2 15c2-2 1-5 2-9a5 5 0 0 1 10 0c1 4 0 7 2 9Z" stroke="#222" stroke-width="1.500" stroke-linejoin="round"/><path d="M7 16c0 3 4 3 4 0" stroke="#222" stroke-width="1.500"/>`)}</button>
        <button aria-label="Copilot">${icon(30, 30, svg`<defs><linearGradient id="cp1" x1="0" y1="0" x2="0" y2="1"><stop stop-color="#1d7fe8"/><stop offset=".5" stop-color="#23b39b"/><stop offset="1" stop-color="#f2d22c"/></linearGradient><linearGradient id="cp2" x1="0" y1="0" x2="0" y2="1"><stop stop-color="#a55cf0"/><stop offset="1" stop-color="#ff6a6a"/></linearGradient></defs><path d="M7 4c1-2 2-3 4-3h8c2 0 3 1 4 5h-5c-2 0-3 1-4 4l-3 10c-1 2-2 3-4 3H4c-3 0-4-2-3-6Z" fill="url(#cp1)"/><path d="m17 1 2 0c2 0 3 1 4 6h-6Z" fill="#1c4fc4"/><path d="M19 8h6c3 0 4 2 3 6l-2 6c-1 3-3 4-5 4h-9c2-1 2-2 3-5l2-8c1-2 1-3 2-3Z" fill="url(#cp2)"/><rect x="7" y="20" width="23" height="9" rx="2" fill="#ffc814"/><text x="10" y="28" font-family="Open Sans" font-size="8" font-weight="700" fill="#222">PRE</text>`)}</button>
      </div>`;
  }
}

@customElement("app-root")
class AppRoot extends LitElement {
  static styles = css`
    :host { display: flex; flex-direction: column; height: 100vh; overflow: hidden; }
  `;
  render() {
    return html`<browser-chrome></browser-chrome><payslip-page></payslip-page><task-bar></task-bar>`;
  }
}
